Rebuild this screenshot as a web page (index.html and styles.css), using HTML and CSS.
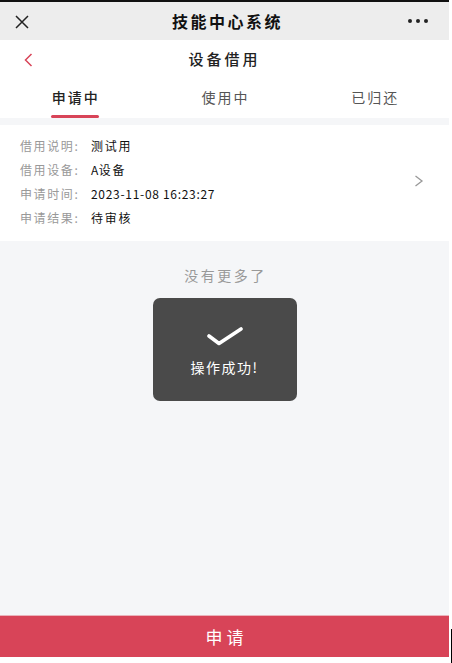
FILE: index.html
```html
<!DOCTYPE html>
<html lang="zh">
<head>
<meta charset="utf-8">
<title>设备借用</title>
<link rel="stylesheet" href="styles.css">
</head>
<body>
<div class="app">
  <div class="topline"></div>
  <header class="wxbar">
    <span class="wx-close">
      <svg width="14" height="14" viewBox="0 0 14 14"><path d="M1 1 L13 13 M13 1 L1 13" stroke="#222" stroke-width="1.5" fill="none"/></svg>
    </span>
    <span class="wx-title">技能中心系统</span>
    <span class="wx-more"><i></i><i></i><i></i></span>
  </header>
  <div class="nav">
    <span class="nav-back">
      <svg width="9" height="14" viewBox="0 0 9 14"><path d="M7.5 1 L1.5 7 L7.5 13" stroke="#d84458" stroke-width="1.5" fill="none"/></svg>
    </span>
    <span class="nav-title">设备借用</span>
    <span></span>
  </div>
  <div class="tabs">
    <div class="tab active"><span class="tab-text">申请中</span><span class="tab-line"></span></div>
    <div class="tab"><span class="tab-text">使用中</span></div>
    <div class="tab"><span class="tab-text">已归还</span></div>
  </div>
  <div class="gap"></div>
  <div class="card">
    <div class="rows">
      <div class="row"><span class="label">借用说明:</span><span class="value">测试用</span></div>
      <div class="row"><span class="label">借用设备:</span><span class="value"><span class="latin">A</span>设备</span></div>
      <div class="row"><span class="label">申请时间:</span><span class="value date">2023-11-08 16:23:27</span></div>
      <div class="row"><span class="label">申请结果:</span><span class="value">待审核</span></div>
    </div>
    <span class="card-arrow">
      <svg width="10" height="12" viewBox="0 0 10 12"><path d="M1.5 1 L8 6 L1.5 11" stroke="#999" stroke-width="1.3" fill="none"/></svg>
    </span>
  </div>
  <main class="content">
    <div class="nomore">没有更多了</div>
    <div class="toast">
      <svg width="36" height="20" viewBox="0 0 36 20"><path d="M2 10 L12 17.5 L34 3" stroke="#fff" stroke-width="3.6" fill="none" stroke-linecap="round" stroke-linejoin="round"/></svg>
      <span class="toast-text">操作成功!</span>
    </div>
  </main>
  <button class="submit">申请</button>
</div>
<div class="gutter"><span class="mark"></span></div>
</body>
</html>
```
FILE: styles.css
```css
html, body {
  margin: 0;
  padding: 0;
  background: #fff;
}
body {
  display: flex;
  height: 663px;
  overflow: hidden;
  font-family: "Noto Sans CJK SC", "Noto Sans", sans-serif;
  color: #222;
}
.app {
  width: 449px;
  height: 657px;
  display: flex;
  flex-direction: column;
}
.gutter {
  width: 3px;
  display: flex;
  flex-direction: column;
  justify-content: flex-end;
}
.mark {
  display: block;
  width: 1px;
  height: 34px;
  margin-left: 2px;
  background: #000;
}
.topline {
  height: 2px;
  background: #111;
}
.wxbar {
  height: 38px;
  background: #ededed;
  display: grid;
  grid-template-columns: 60px 1fr 60px;
  align-items: center;
}
.wx-close {
  display: flex;
  padding-left: 15px;
  padding-top: 1px;
}
.wx-title {
  text-align: center;
  font-size: 16px;
  font-weight: 600;
  letter-spacing: 2.5px;
  margin-right: -6px;
  color: #111;
}
.wx-more {
  display: flex;
  gap: 4px;
  justify-content: flex-end;
  padding-right: 21px;
}
.wx-more i {
  width: 4px;
  height: 4px;
  border-radius: 50%;
  background: #222;
}
.nav {
  height: 40px;
  background: #fff;
  display: grid;
  grid-template-columns: 60px 1fr 60px;
  align-items: center;
}
.nav-back {
  display: flex;
  padding-left: 24px;
}
.nav-title {
  text-align: center;
  font-size: 15px;
  font-weight: 500;
  letter-spacing: 3px;
  color: #222;
  padding-bottom: 3px;
}
.tabs {
  height: 38px;
  background: #fff;
  display: grid;
  grid-template-columns: repeat(3, 1fr);
}
.tab {
  display: flex;
  flex-direction: column;
  align-items: center;
  justify-content: flex-end;
}
.tab-text {
  font-size: 14px;
  letter-spacing: 2px;
  margin-right: -2px;
  color: #555;
  line-height: 20px;
  padding-bottom: 11px;
}
.tab.active .tab-text {
  color: #222;
  font-weight: 500;
  padding-bottom: 8px;
}
.tab-line {
  display: block;
  width: 48px;
  height: 3px;
  border-radius: 2px;
  background: #d84458;
}
.gap {
  height: 7px;
  background: #f5f6f8;
}
.card {
  background: #fff;
  padding: 8px 25px 12px 20px;
  display: flex;
  align-items: center;
  justify-content: space-between;
}
.row {
  height: 24px;
  display: flex;
  align-items: center;
  font-size: 12px;
}
.label {
  color: #999;
  letter-spacing: 1.6px;
  width: 71px;
}
.value {
  color: #111;
  letter-spacing: 1.8px;
}
.value .latin {
  letter-spacing: 0.5px;
}
.value.date {
  letter-spacing: 0.7px;
}
.card-arrow {
  display: flex;
}
.content {
  flex: 1;
  background: #f5f6f8;
  display: flex;
  flex-direction: column;
  align-items: center;
}
.nomore {
  margin-top: 24px;
  line-height: 20px;
  font-size: 14px;
  letter-spacing: 2.5px;
  color: #999;
  margin-right: -2px;
}
.toast {
  margin-top: 13px;
  width: 144px;
  height: 103px;
  border-radius: 7px;
  background: #4a4a4a;
  display: flex;
  flex-direction: column;
  align-items: center;
  box-sizing: border-box;
  padding-top: 28px;
}
.toast-text {
  margin-top: 11px;
  color: #fff;
  font-size: 14px;
  letter-spacing: 1.5px;
}
.submit {
  height: 42px;
  border: 0;
  border-top: 1px solid #eab3bb;
  background: #d84458;
  color: #fff;
  font-family: "Noto Sans CJK SC", "Noto Sans", sans-serif;
  font-size: 17px;
  letter-spacing: 4px;
  padding: 0 0 0 4px;
  margin: 0;
}
```
